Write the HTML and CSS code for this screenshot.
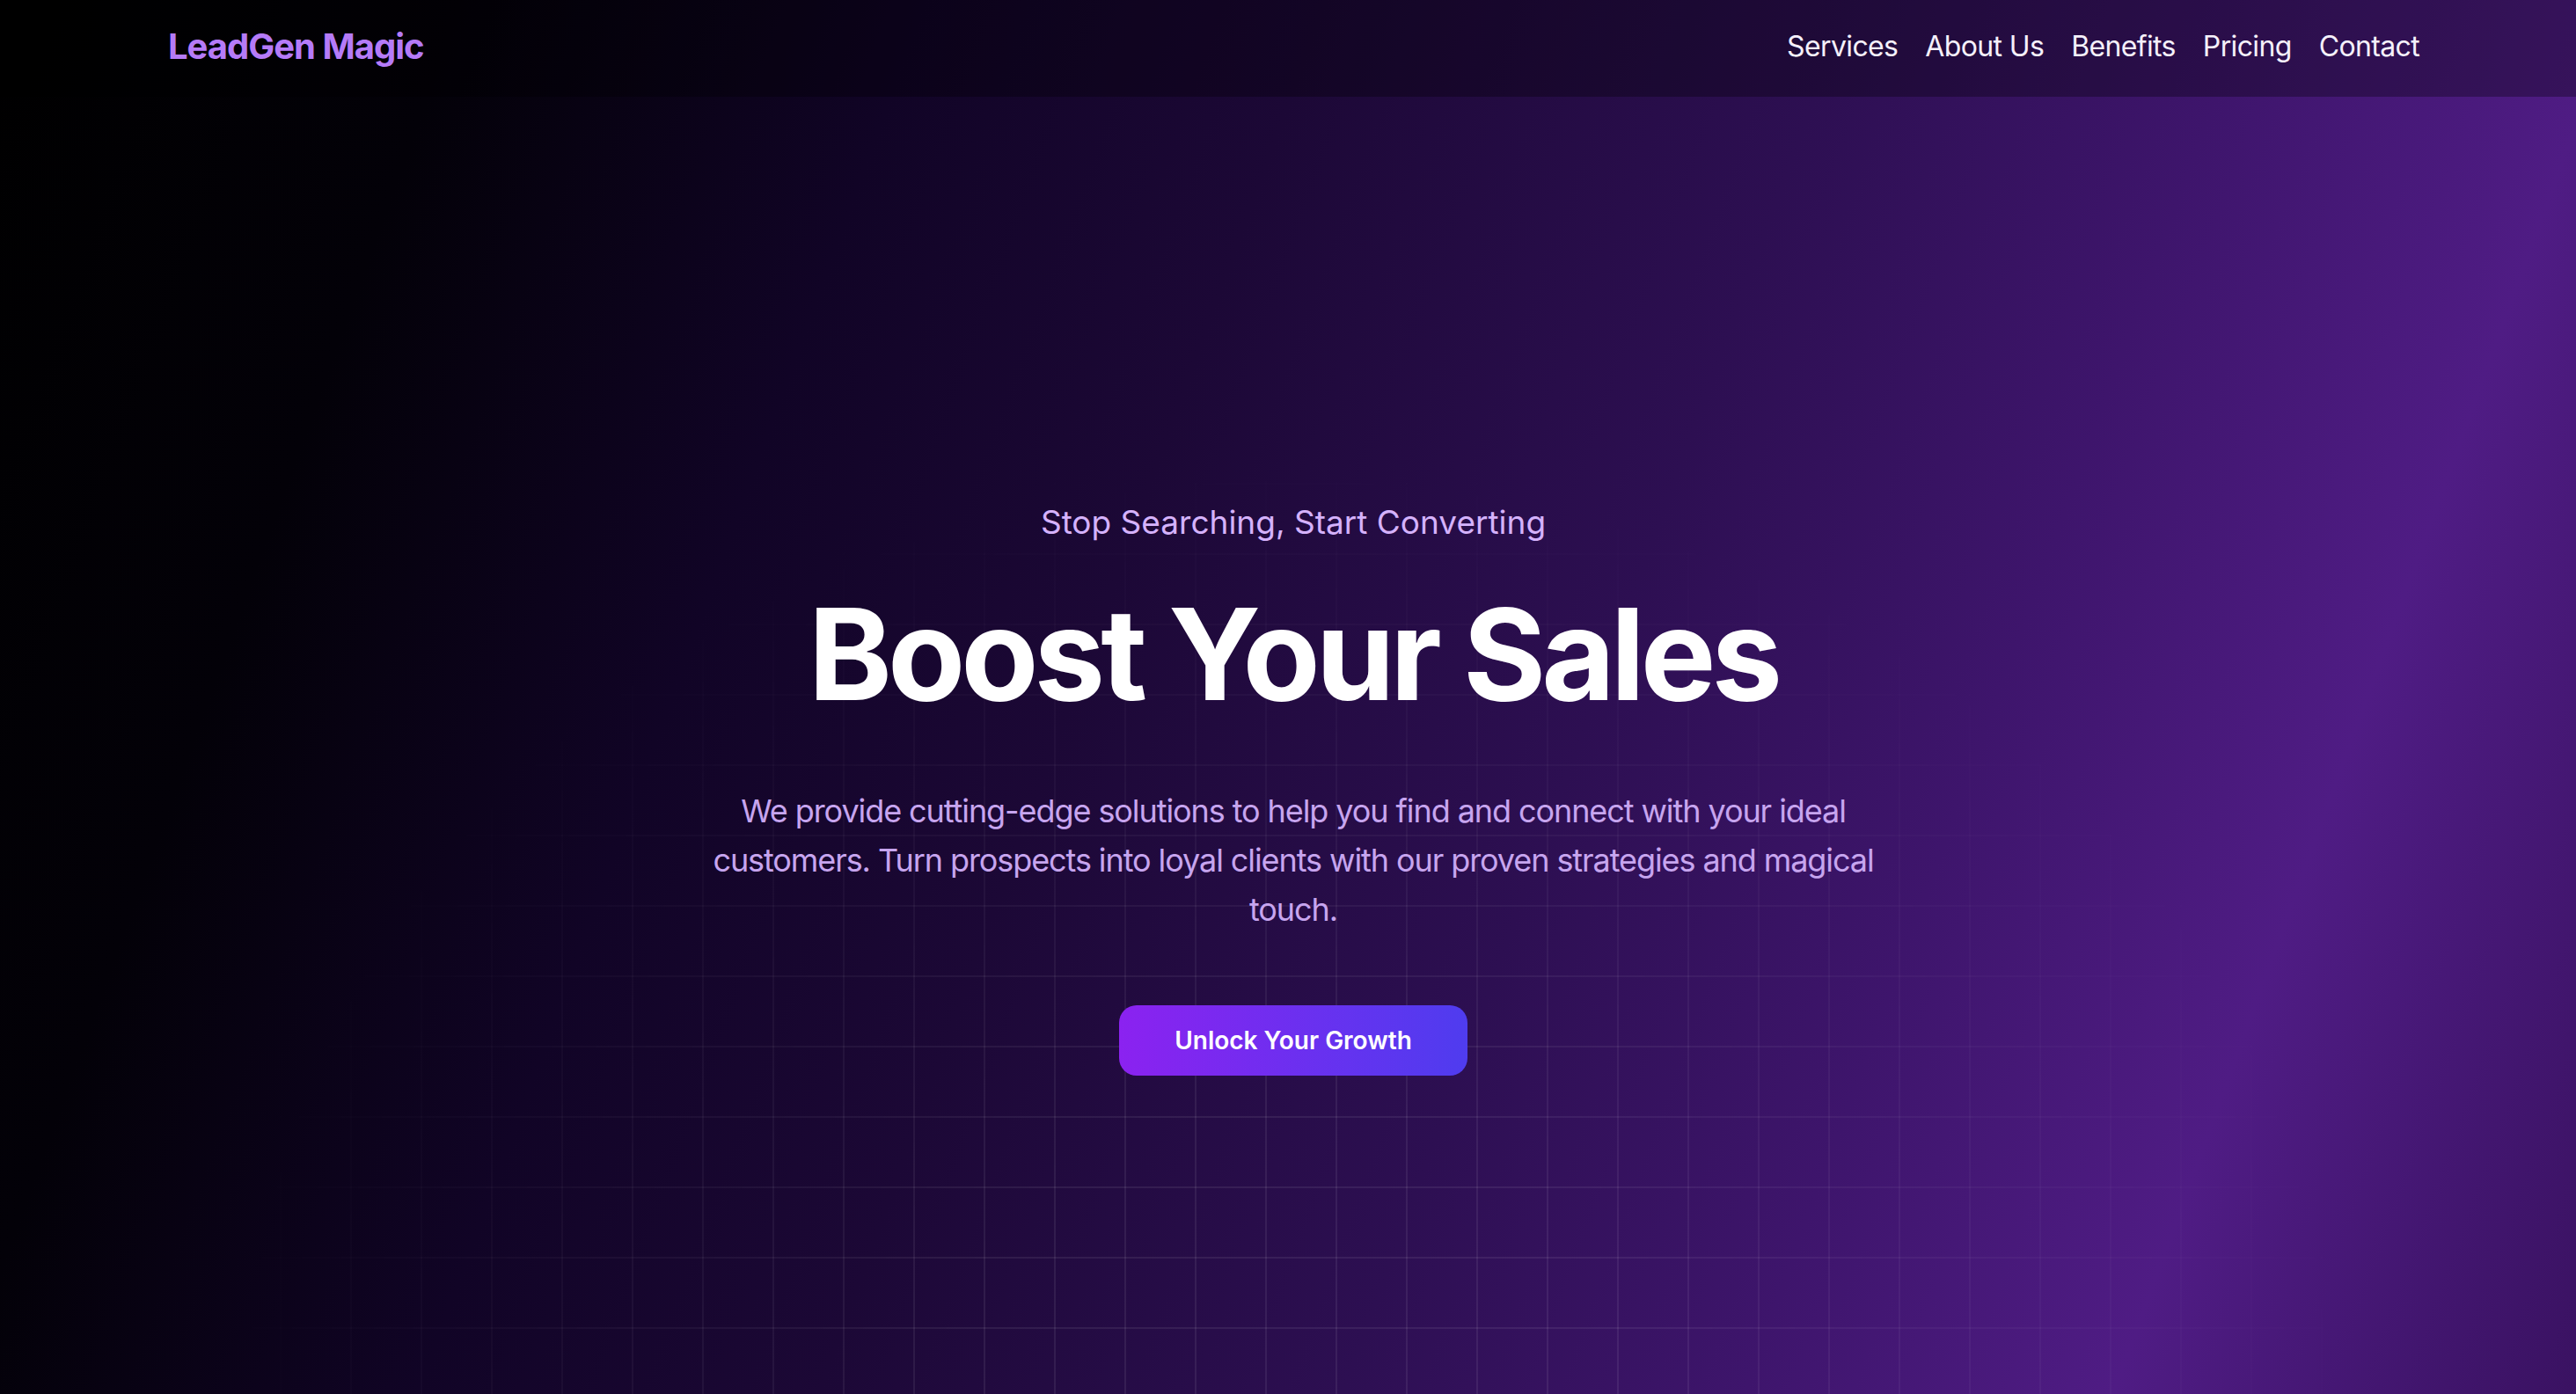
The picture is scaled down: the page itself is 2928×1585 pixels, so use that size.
FILE: index.html
```html
<!DOCTYPE html>
<html lang="en">
<head>
<meta charset="utf-8">
<title>LeadGen Magic</title>
<link rel="stylesheet" href="styles.css">
</head>
<body>
<div class="page">
  <div class="grid-overlay"></div>
  <header class="site-header">
    <a class="logo" href="#">LeadGen Magic</a>
    <nav class="nav">
      <a href="#">Services</a>
      <a href="#">About Us</a>
      <a href="#">Benefits</a>
      <a href="#">Pricing</a>
      <a href="#">Contact</a>
    </nav>
  </header>
  <main class="hero">
    <p class="eyebrow">Stop Searching, Start Converting</p>
    <h1 class="headline">Boost Your Sales</h1>
    <p class="lead">We provide cutting-edge solutions to help you find and connect with your ideal customers. Turn prospects into loyal clients with our proven strategies and magical touch.</p>
    <a class="cta" href="#">Unlock Your Growth</a>
  </main>
</div>
</body>
</html>
```

FILE: styles.css
```css
* { box-sizing: border-box; }
html, body { margin: 0; padding: 0; }
body {
  font-family: Inter, "Noto Sans", "Liberation Sans", sans-serif;
  color: #fff;
  background: #000;
  overflow: hidden;
}
a { text-decoration: none; color: inherit; }

.page {
  position: relative;
  width: 100%;
  height: 1585px;
  overflow: hidden;
  background: linear-gradient(110deg,
    #000000 0%,
    #030108 15%,
    #110426 30%,
    #1c0836 43%,
    #2d0f52 60%,
    #3e156c 73%,
    #4f1c84 85%,
    #3a1262 100%);
}

.grid-overlay {
  position: absolute;
  inset: 0;
  pointer-events: none;
  background-image:
    linear-gradient(to right, rgba(255,255,255,0.075) 2px, transparent 2px),
    linear-gradient(to bottom, rgba(255,255,255,0.075) 2px, transparent 2px);
  background-size: 80px 80px;
  background-position: 78px 69px;
  -webkit-mask-image: radial-gradient(ellipse 1250px 1100px at 50% 100%, #000 30%, transparent 100%);
  mask-image: radial-gradient(ellipse 1250px 1100px at 50% 100%, #000 30%, transparent 100%);
}

.site-header {
  position: relative;
  height: 110px;
  display: flex;
  align-items: center;
  justify-content: space-between;
  padding: 0 178px 6px 191px;
  background: rgba(0, 0, 0, 0.3);
}

.logo {
  font-size: 40px;
  font-weight: 700;
  letter-spacing: -0.025em;
  color: #b57bf8;
}

.nav {
  display: flex;
  gap: 31px;
}
.nav a {
  font-size: 32px;
  color: #f5f0fb;
  letter-spacing: -0.02em;
}

.hero {
  position: relative;
  display: flex;
  flex-direction: column;
  align-items: center;
  text-align: center;
  padding: 456px 0 0 12px;
}

.eyebrow {
  margin: 0 0 50px;
  font-size: 37px;
  line-height: 56px;
  color: #d5b2fc;
  letter-spacing: 0;
}

.headline {
  margin: 0 0 78px;
  font-size: 144px;
  line-height: 144px;
  font-weight: 700;
  letter-spacing: -0.035em;
  color: #ffffff;
}

.lead {
  margin: 0 0 81px;
  max-width: 1370px;
  font-size: 36px;
  line-height: 56px;
  color: #c7a5ef;
  letter-spacing: -0.03em;
}

.cta {
  display: inline-flex;
  align-items: center;
  justify-content: center;
  width: 396px;
  height: 80px;
  border-radius: 20px;
  font-size: 28px;
  font-weight: 600;
  color: #fff;
  background: linear-gradient(to right, #8b22f0, #4f3cef);
}
```
